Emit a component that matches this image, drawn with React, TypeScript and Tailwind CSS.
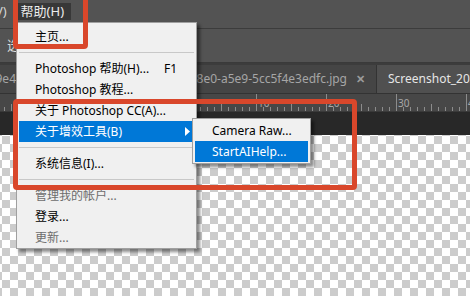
import React from 'react';
import clsx from 'clsx';

type Entry = { sep?: boolean; label?: string; shortcut?: string; active?: boolean; disabled?: boolean; arrow?: boolean };

const helpMenu: Entry[] = [
  { label: '主页...' },
  { sep: true },
  { label: 'Photoshop 帮助(H)...', shortcut: 'F1' },
  { label: 'Photoshop 教程...' },
  { label: '关于 Photoshop CC(A)...' },
  { label: '关于增效工具(B)', active: true, arrow: true },
  { sep: true },
  { label: '系统信息(I)...' },
  { sep: true },
  { label: '管理我的帐户...', disabled: true },
  { label: '登录...' },
  { label: '更新...', disabled: true },
];

const MenuRow: React.FC<{ e: Entry; pl: string }> = ({ e, pl }) => {
  if (e.sep) {
    return (
      <div className="h-[11px] pt-[5px] mx-[2px]">
        <div className="h-px bg-[#c8c8c8]" />
      </div>
    );
  }
  return (
    <div
      className={clsx(
        'relative mx-[2px] h-[21px] flex items-center pr-[17px] whitespace-nowrap',
        pl,
        e.active ? 'bg-[#0078d7] text-white' : e.disabled ? 'text-[#6d6d6d]' : 'text-black'
      )}
    >
      <span className="flex-1">{e.label}</span>
      {e.shortcut && <span>{e.shortcut}</span>}
      {e.arrow && (
        <svg className="absolute right-[4px] top-[6px]" width="5" height="9" viewBox="0 0 5 9">
          <path d="M0 0 L5 4.5 L0 9 Z" fill="#ffffff" />
        </svg>
      )}
    </div>
  );
};

const Ruler: React.FC = () => {
  const ticks = Array.from({ length: 68 }, (_, i) => 4 + i * 7);
  return (
    <svg width="470" height="18" className="block">
      {ticks.map((x) => {
        const k = (((x - 326) / 7) % 10 + 10) % 10;
        const y1 = k === 0 ? 0 : k === 5 ? 10 : 13;
        return <line key={x} x1={x + 0.5} x2={x + 0.5} y1={y1} y2={17} stroke="#8c8c8c" strokeWidth="1" />;
      })}
      {[
        [256, '10'],
        [326, '20'],
        [396, '30'],
        [466, '40'],
      ].map(([x, t]) => (
        <text key={t as string} x={(x as number) + 2} y={13} fontSize="10" fill="#a8a8a8" fontFamily="Noto Sans, sans-serif">
          {t}
        </text>
      ))}
      <line x1="0" x2="470" y1="17.5" y2="17.5" stroke="#3a3a3a" />
    </svg>
  );
};

export default function App() {
  return (
    <div className="relative w-[470px] h-[296px] overflow-hidden flex flex-col bg-[#535353] text-[12px] font-['Noto_Sans','Noto_Sans_CJK_SC',sans-serif]">
      {/* menu bar */}
      <div className="h-[29px] shrink-0 flex items-start pt-[3px] border-b border-[#3c3c3c]">
        <span className="ml-[-35px] leading-[17px] text-[13px] text-[#d6d6d6] whitespace-nowrap">视图(V)</span>
        <div className="ml-[10px] w-[54px] h-[17px] pl-[4px] bg-[#383838] leading-[17px] text-[13px] text-[#ececec] whitespace-nowrap">
          帮助(H)
        </div>
      </div>

      {/* options bar */}
      <div className="h-[34px] shrink-0 flex items-center pl-[7px] border-b border-[#3a3a3a] text-[13px] text-[#dcdcdc]">
        选择
      </div>

      {/* document tabs */}
      <div className="h-[30px] shrink-0 flex bg-[#3c3c3c] pt-[2px]">
        <div className="w-[24px] shrink-0 flex items-center justify-end overflow-hidden pr-[8px] bg-[#454545] text-[#a6a6a6] whitespace-nowrap">
          IMG_20231019e4
        </div>
        <div className="w-[352px] shrink-0 flex items-center justify-end pr-[11px] gap-[9px] bg-[#454545] border-l border-[#333333] text-[#a6a6a6] whitespace-nowrap overflow-hidden">
          <span>2b1c9a3e-7d1f-48e0-a5e9-5cc5f4e3edfc.jpg</span>
          <span className="text-[11px] font-bold text-[#9c9c9c]">✕</span>
        </div>
        <div className="flex-1 flex items-center pl-[11px] bg-[#505050] border-l border-[#333333] text-[#e6e6e6] whitespace-nowrap overflow-hidden">
          Screenshot_2024
        </div>
      </div>

      {/* ruler */}
      <div className="h-[18px] shrink-0 bg-[#474747] border-t border-[#333333] box-content">
        <Ruler />
      </div>

      {/* pasteboard */}
      <div className="h-[23px] shrink-0 bg-[#282828]" />

      {/* canvas */}
      <div className="flex-1 bg-[conic-gradient(#ffffff_25%,#cccccc_0_50%,#ffffff_0_75%,#cccccc_0)] bg-[length:16px_16px] bg-[position:2px_1px]" />

      {/* help menu */}
      <div className="absolute left-[16px] top-[22px] w-[181px] pt-[3px] bg-[#f0f0f0] border border-[#a0a0a0] shadow-[3px_3px_3px_rgba(0,0,0,0.45)]">
        {helpMenu.map((e, i) => (
          <MenuRow key={i} e={e} pl="pl-[16px]" />
        ))}
      </div>

      {/* plug-ins submenu */}
      <div className="absolute left-[192px] top-[118px] w-[119px] py-[1px] bg-[#f0f0f0] border border-[#a0a0a0] shadow-[3px_3px_3px_rgba(0,0,0,0.45)]">
        <MenuRow e={{ label: 'Camera Raw...' }} pl="pl-[17px]" />
        <MenuRow e={{ label: 'StartAIHelp...', active: true }} pl="pl-[17px]" />
      </div>

      {/* annotation marks */}
      <div className="absolute left-[13px] top-[-5px] w-[75px] h-[54px] border-[5px] border-[#d9472b] rounded-[4px]" />
      <div className="absolute left-[13px] top-[99px] w-[344px] h-[91px] border-[5px] border-[#d9472b] rounded-[4px]" />
    </div>
  );
}
